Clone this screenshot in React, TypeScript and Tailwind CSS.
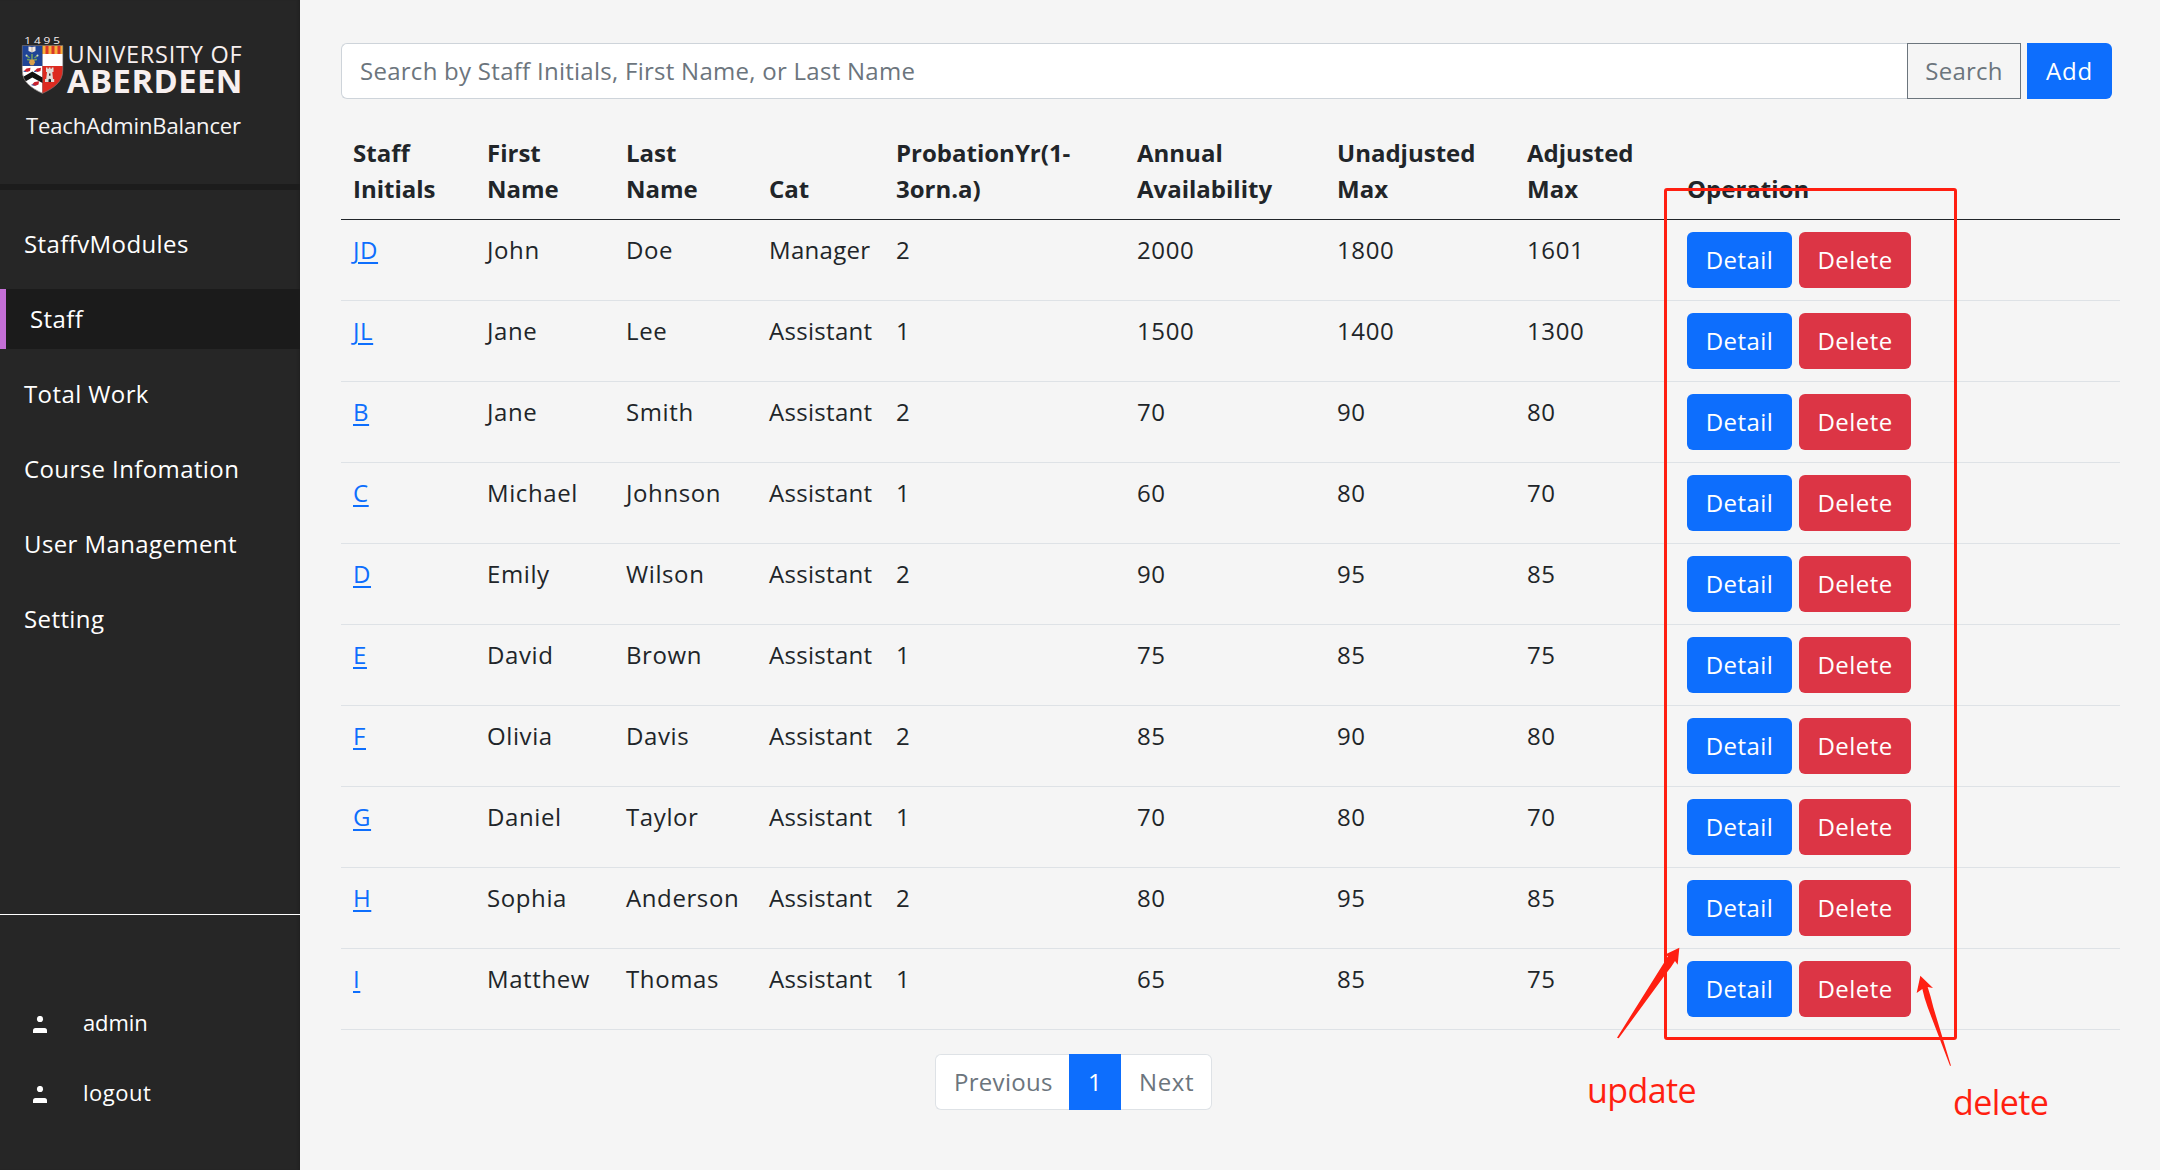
type Row = [string, string, string, string, string, string, string, string];

const rows: Row[] = [
  ["JD", "John", "Doe", "Manager", "2", "2000", "1800", "1601"],
  ["JL", "Jane", "Lee", "Assistant", "1", "1500", "1400", "1300"],
  ["B", "Jane", "Smith", "Assistant", "2", "70", "90", "80"],
  ["C", "Michael", "Johnson", "Assistant", "1", "60", "80", "70"],
  ["D", "Emily", "Wilson", "Assistant", "2", "90", "95", "85"],
  ["E", "David", "Brown", "Assistant", "1", "75", "85", "75"],
  ["F", "Olivia", "Davis", "Assistant", "2", "85", "90", "80"],
  ["G", "Daniel", "Taylor", "Assistant", "1", "70", "80", "70"],
  ["H", "Sophia", "Anderson", "Assistant", "2", "80", "95", "85"],
  ["I", "Matthew", "Thomas", "Assistant", "1", "65", "85", "75"],
];

const headers: string[][] = [
  ["Staff", "Initials"],
  ["First", "Name"],
  ["Last", "Name"],
  ["Cat"],
  ["ProbationYr(1-", "3orn.a)"],
  ["Annual", "Availability"],
  ["Unadjusted", "Max"],
  ["Adjusted", "Max"],
  ["Operation"],
];

const navItems = [
  { label: "StaffvModules", active: false },
  { label: "Staff", active: true },
  { label: "Total Work", active: false },
  { label: "Course Infomation", active: false },
  { label: "User Management", active: false },
  { label: "Setting", active: false },
];

function Crest() {
  return (
    <svg
      className="ml-5 h-[74px] w-[225px] font-['Open_Sans',sans-serif]"
      viewBox="20 30 225 74"
      aria-label="University of Aberdeen"
    >
      <defs>
        <clipPath id="shield">
          <path d="M22 45.5H63V70C63 82 54 88 42.5 93.5C31 88 22 82 22 70Z" />
        </clipPath>
      </defs>
      <text
        transform="translate(24.2 43.8) scale(1.3 1)"
        fontSize="9.2"
        fontWeight="500"
        fill="#f7efef"
        letterSpacing="2.2"
      >
        1495
      </text>
      <g clipPath="url(#shield)">
        <rect x="22" y="45" width="20.5" height="21" fill="#1f4496" />
        <rect x="42.5" y="45" width="21" height="9" fill="#f7b03a" />
        <rect x="45.5" y="45" width="3" height="9" fill="#d9372a" />
        <rect x="51.5" y="45" width="3" height="9" fill="#d9372a" />
        <rect x="57.5" y="45" width="3" height="9" fill="#d9372a" />
        <rect x="42.5" y="54" width="21" height="12" fill="#fff" />
        <rect x="22" y="66" width="20.5" height="28" fill="#fff" />
        <rect x="42.5" y="66" width="21" height="28" fill="#dc2a20" />
        {/* open book and lily pot */}
        <path d="M28.5 46.5L32 47L35.5 46.5V51L32 52.5L28.5 51Z" fill="#f3e9e0" />
        <path d="M32 47V52" stroke="#a89a94" strokeWidth="0.8" />
        <path
          d="M26.5 55.5L29.5 58M37.5 55.5L34.5 58M32 54V60M27 59.5L30 60M37 59.5L34 60"
          stroke="#6f9c62"
          strokeWidth="1.6"
          fill="none"
        />
        <path d="M30 59.5H34L35 62.5L33.5 65.2H30.5L29 62.5Z" fill="#d9a04a" />
        <circle cx="26.5" cy="55.5" r="1" fill="#d8dcc8" />
        <circle cx="37.5" cy="55.5" r="1" fill="#d8dcc8" />
        {/* chevron with boar heads */}
        <path d="M22 77.5L32.3 71.5L42.5 77.5V83L32.3 77.5L22 83.5Z" fill="#111" />
        <path d="M24 71L26.5 68.5L30.5 67.8L30 71L27 72Z" fill="#c8202c" />
        <path d="M34.5 71L37 68.5L41 67.8L40.5 71L37.5 72Z" fill="#c8202c" />
        <path d="M32 84.5L34.5 82L39 81.3L38.5 84.5L35 86Z" fill="#c8202c" />
        <path d="M23.5 71.3L26 71.6M34 71.3L36.5 71.6M31.5 84.8L34.5 85.4" stroke="#3a55a0" strokeWidth="1" />
        {/* castle tower */}
        <path
          d="M46 67.5H47.5V68.8H48.8V67.5H50.5V68.8H51.8V67.5H53.5V72H52.3L53 79H54.2V82H45V79H46.2L47 72H46Z"
          fill="#e0dcd8"
        />
        <path d="M48.5 82V79.5Q49.7 77.8 51 79.5V82Z" fill="#222" />
        <rect x="49" y="73.5" width="1.5" height="2.2" fill="#333" />
      </g>
      <path
        d="M22.3 45.5H62.8V70C62.8 82 54 88 42.5 93.3C31 88 22.3 82 22.3 70Z"
        fill="none"
        stroke="#77706e"
        strokeWidth="0.7"
      />
      <text x="67.6" y="62.5" fontSize="23.5" fill="#f7efef" textLength="174.5" lengthAdjust="spacing">
        UNIVERSITY OF
      </text>
      <text
        x="67"
        y="92.7"
        fontSize="32"
        fontWeight="700"
        fill="#f7efef"
        textLength="176"
        lengthAdjust="spacingAndGlyphs"
      >
        ABERDEEN
      </text>
    </svg>
  );
}

function PersonIcon() {
  return (
    <svg className="mt-3 h-[17px] w-[14px]" viewBox="0 0 14 17" fill="#fff">
      <circle cx="7" cy="3" r="3.1" />
      <path d="M0 17V14.5Q0 12 2.5 12H11.5Q14 12 14 14.5V17Z" />
    </svg>
  );
}

function Sidebar() {
  return (
    <aside className="flex w-[300px] shrink-0 flex-col bg-[#262626] text-white shadow-[inset_-3px_0_3px_-2px_#1f1f1f]">
      <div className="h-[190px] border-b-6 border-[#1c1c1c] pt-[30px]">
        <Crest />
        <div className="mt-[3px] ml-[26px] text-[22px] leading-9 tracking-[-0.12px] text-[#f7f5f5]">
          TeachAdminBalancer
        </div>
      </div>
      <nav className="flex h-[724px] flex-col gap-[15px] pt-6 tracking-[0.4px]">
        {navItems.map((item) => (
          <a
            key={item.label}
            className={
              item.active
                ? "flex h-[60px] items-center border-l-6 border-[#c46fd6] bg-[#1b1b1b] pb-px pl-6"
                : "flex h-[60px] items-center pb-px pl-6"
            }
          >
            {item.label}
          </a>
        ))}
      </nav>
      <div className="flex flex-col gap-[34px] border-t border-white pt-[89px] text-[22px] leading-9">
        <a className="flex pl-[33px]">
          <PersonIcon />
          <span className="ml-9 tracking-[-0.1px]">admin</span>
        </a>
        <a className="flex pl-[33px]">
          <PersonIcon />
          <span className="ml-9 tracking-[0.5px]">logout</span>
        </a>
      </div>
    </aside>
  );
}

function SearchBar() {
  return (
    <div className="flex h-14 w-[1771px]">
      <div className="flex grow items-center rounded-l-md border border-r-0 border-[#ced4da] bg-white pb-px pl-[18px] tracking-[0.27px] text-[#6c757d]">
        Search by Staff Initials, First Name, or Last Name
      </div>
      <button className="w-[114px] border border-[#6c757d] pb-px tracking-[0.25px] text-[#6c757d]">Search</button>
      <button className="ml-1.5 w-[85px] rounded-r-md bg-[#0d6efd] pb-px tracking-[0.9px] text-white">Add</button>
    </div>
  );
}

function StaffTable() {
  return (
    <table className="mt-6 w-[1779px] table-fixed border-separate border-spacing-0 text-left leading-[35px] text-[#212529]">
      <colgroup>
        <col className="w-[134px]" />
        <col className="w-[139px]" />
        <col className="w-[143px]" />
        <col className="w-[127px]" />
        <col className="w-[241px]" />
        <col className="w-[200px]" />
        <col className="w-[190px]" />
        <col className="w-[160px]" />
        <col />
      </colgroup>
      <thead>
        <tr>
          {headers.map((lines) => (
            <th
              key={lines.join(" ")}
              className="border-b border-[#212529] p-3 align-bottom font-bold tracking-normal whitespace-nowrap"
            >
              {lines.map((line) => (
                <div key={line} className="h-9">
                  {line}
                </div>
              ))}
            </th>
          ))}
        </tr>
      </thead>
      <tbody>
        {rows.map((row) => (
          <tr key={row[0]}>
            {row.map((cell, i) => (
              <td
                key={i}
                className={
                  i === 3
                    ? "border-b border-[#dee2e6] p-3 align-top tracking-[0.3px] whitespace-nowrap"
                    : "border-b border-[#dee2e6] p-3 align-top tracking-[0.6px] whitespace-nowrap"
                }
              >
                {i === 0 ? (
                  <a className="text-[#0d6efd] underline decoration-2 underline-offset-[3px]">{cell}</a>
                ) : (
                  cell
                )}
              </td>
            ))}
            <td className="border-b border-[#dee2e6] p-3">
              <div className="flex gap-[7px]">
                <button className="h-14 w-[105px] rounded-md bg-[#0d6efd] pb-px text-white">Detail</button>
                <button className="h-14 w-28 rounded-md bg-[#dc3545] pb-px text-white">Delete</button>
              </div>
            </td>
          </tr>
        ))}
      </tbody>
    </table>
  );
}

function Pagination() {
  return (
    <div className="mt-6 ml-[594px] flex h-14 w-[277px] leading-none">
      <div className="flex w-[134px] items-center rounded-l-md border border-r-0 border-[#dee2e6] bg-white pb-px pl-[18px] tracking-[0.3px] text-[#6c757d]">
        Previous
      </div>
      <div className="flex w-[52px] items-center justify-center bg-[#0d6efd] pb-px text-white">1</div>
      <div className="flex grow items-center rounded-r-md border border-l-0 border-[#dee2e6] bg-white pb-px pl-[18px] tracking-[0.6px] text-[#6c757d]">
        Next
      </div>
    </div>
  );
}

function Annotations() {
  return (
    <div className="pointer-events-none absolute inset-0 text-[34px] leading-none tracking-[-0.6px] text-[#ff1f11]">
      <div className="absolute top-[188px] left-[1664px] h-[852px] w-[293px] rounded-[3px] border-3 border-[#ff1f11]" />
      <svg className="absolute top-[920px] left-[1560px] h-[220px] w-[520px]" viewBox="0 0 1560 660" fill="#ff1f11">
        <path d="M358 83L353 134L345 123Q335 140 320 158L176 355L171 353L313 127L324 108L311 106Z" />
        <path d="M1081 167L1119 204L1103 201Q1112 228 1120 262L1173 437L1170 437L1103 262Q1093 235 1087 207L1070 219Z" />
      </svg>
      <span className="absolute top-[1073px] left-[1587px]">update</span>
      <span className="absolute top-[1085px] left-[1953px]">delete</span>
    </div>
  );
}

export default function App() {
  return (
    <div className="relative flex h-[1170px] w-[2160px] overflow-hidden bg-[#f5f5f5] font-['Open_Sans',sans-serif] text-[24px] leading-9 tracking-[0.45px]">
      <Sidebar />
      <main className="flex flex-col pt-[43px] pl-[41px]">
        <SearchBar />
        <StaffTable />
        <Pagination />
      </main>
      <Annotations />
    </div>
  );
}
